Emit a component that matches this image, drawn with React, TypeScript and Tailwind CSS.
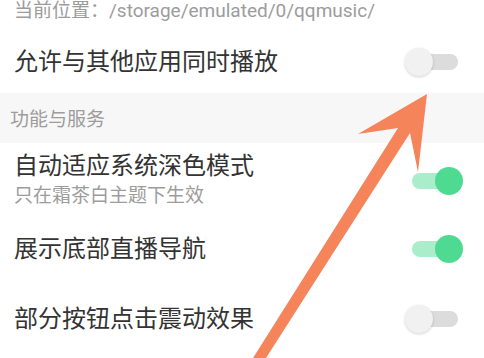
import React from "react";

function Toggle({ on }: { on: boolean }) {
  return (
    <div className="relative w-[58px] h-[28px] shrink-0">
      {on ? (
        <>
          <div className="absolute left-[7px] top-[6px] w-[38px] h-[16px] rounded-full bg-[#a9edca]" />
          <div className="absolute left-[30px] top-0 w-[28px] h-[28px] rounded-full bg-[#4fda92]" />
        </>
      ) : (
        <>
          <div className="absolute left-[15px] top-[6px] w-[38px] h-[16px] rounded-full bg-[#dcdcdc]" />
          <div className="absolute left-0 top-0 w-[28px] h-[28px] rounded-full bg-[#f1f1f1] shadow-[0_1px_3px_rgba(0,0,0,0.18)]" />
        </>
      )}
    </div>
  );
}

export default function App() {
  const font = { fontFamily: 'Roboto, "Noto Sans CJK SC", sans-serif' };
  return (
    <div className="relative w-[484px] h-[358px] overflow-hidden bg-white" style={font}>
      <div className="h-[22px] pl-[14px] text-[19px] leading-[22px] text-[#9c9c9c] whitespace-nowrap">
        当前位置：/storage/emulated/0/qqmusic/
      </div>
      <div className="mt-[14px] mb-[5px] h-[52px] flex items-center justify-between pl-[14px] pr-[21px]">
        <span className="text-[24px] leading-[30px] text-[#333333]">允许与其他应用同时播放</span>
        <Toggle on={false} />
      </div>
      <div className="h-[50px] bg-[#f7f7f7] pl-[10px] pt-[15px] text-[19px] leading-[24px] text-[#9c9c9c]">
        功能与服务
      </div>
      <div className="flex items-center justify-between pl-[14px] pr-[21px] pt-[8px] pb-[8px]">
        <div className="flex flex-col">
          <span className="text-[24px] leading-[30px] text-[#333333]">自动适应系统深色模式</span>
          <span className="text-[19px] leading-[30px] text-[#9c9c9c]">只在霜茶白主题下生效</span>
        </div>
        <Toggle on={true} />
      </div>
      <div className="h-[60px] flex items-center justify-between pl-[14px] pr-[21px]">
        <span className="text-[24px] leading-[30px] text-[#333333]">展示底部直播导航</span>
        <Toggle on={true} />
      </div>
      <div className="h-[80px] flex items-center justify-between pl-[14px] pr-[21px]">
        <span className="text-[24px] leading-[30px] text-[#333333]">部分按钮点击震动效果</span>
        <Toggle on={false} />
      </div>
      <svg className="absolute inset-0 pointer-events-none" width="484" height="358" viewBox="0 0 484 358">
        <polygon
          points="427,94 418,172 410,133 266,358 253,358 398,128 358,134"
          fill="#f5845a"
        />
      </svg>
    </div>
  );
}
